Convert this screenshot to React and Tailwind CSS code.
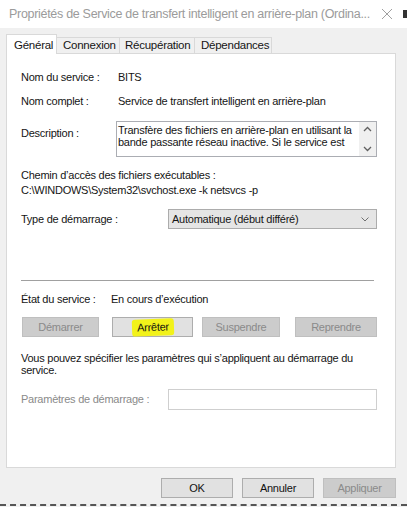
import React from "react";

const Btn = ({ children, disabled, className = "" }) => (
  <div
    className={
      "h-[20px] flex items-center justify-center border " +
      (disabled
        ? "bg-[#cccccc] border-[#bfbfbf] text-[#8a8a8a] "
        : "bg-[#e1e1e1] border-[#adadad] text-[#111] ") +
      className
    }
  >
    {children}
  </div>
);

export default function App() {
  return (
    <div
      className="w-[407px] h-[507px] bg-[#f0f0f0] overflow-hidden flex flex-col text-[11px] tracking-[-0.25px] text-[#151515]"
      style={{ fontFamily: '"Liberation Sans", Arial, sans-serif' }}
    >
      {/* Title bar */}
      <div className="h-[28px] bg-white flex items-center shrink-0">
        <div className="pl-[9px] text-[12.5px] text-[#9b9b9b] whitespace-nowrap w-[380px] tracking-[-0.3px]">
          Propriétés de Service de transfert intelligent en arrière-plan (Ordina...
        </div>
        <svg width="12" height="12" viewBox="0 0 12 12" className="ml-[1px]">
          <path d="M1 1 L11 11 M11 1 L1 11" stroke="#a0a0a0" strokeWidth="1" />
        </svg>
        <div className="ml-auto w-[4px] h-[8px] bg-[#333] mr-0" />
      </div>

      <div className="flex-1 pl-[6px] pr-[11px] flex flex-col">
        {/* Tabs */}
        <div className="mt-[6px] h-[20px] flex items-end relative z-10">
          <div className="w-[51px] h-[20px] bg-white border border-b-0 border-[#d9d9d9] flex items-start pt-[2px] pl-[7px] text-[11.5px]">
            Général
          </div>
          <div className="w-[63px] h-[17px] border border-l-0 border-b-0 border-[#d9d9d9] flex items-center pl-[6px] text-[11.5px]">
            Connexion
          </div>
          <div className="w-[75px] h-[17px] border border-l-0 border-b-0 border-[#d9d9d9] flex items-center pl-[5px] text-[11.5px]">
            Récupération
          </div>
          <div className="w-[77px] h-[17px] border border-l-0 border-b-0 border-[#d9d9d9] flex items-center pl-[6px] text-[11.5px]">
            Dépendances
          </div>
        </div>

        {/* Panel */}
        <div className="-mt-[1px] h-[415px] bg-white border border-[#d9d9d9] pl-[14px] flex flex-col">
          <div className="mt-[15px] flex leading-[16px]">
            <div className="w-[97px]">Nom du service :</div>
            <div>BITS</div>
          </div>
          <div className="mt-[8px] flex leading-[16px]">
            <div className="w-[97px]">Nom complet :</div>
            <div>Service de transfert intelligent en arrière-plan</div>
          </div>
          <div className="mt-[12px] flex">
            <div className="w-[95px] mt-[4px] leading-[16px]">Description :</div>
            <div className="w-[261px] h-[36px] border border-[#abadb3] flex">
              <div className="flex-1 pl-[1px] pt-[2px] leading-[12px] h-[34px] overflow-hidden">
                Transfère des fichiers en arrière-plan en utilisant la bande passante réseau inactive. Si le service est
              </div>
              <div className="w-[17px] bg-[#f0f0f0] flex flex-col items-center justify-between py-[4px]">
                <svg width="9" height="6" viewBox="0 0 9 6">
                  <path d="M1 5 L4.5 1.5 L8 5" stroke="#606060" strokeWidth="1.3" fill="none" />
                </svg>
                <svg width="9" height="6" viewBox="0 0 9 6">
                  <path d="M1 1 L4.5 4.5 L8 1" stroke="#606060" strokeWidth="1.3" fill="none" />
                </svg>
              </div>
            </div>
          </div>
          <div className="mt-[11px] leading-[15px]">
            <div>Chemin d’accès des fichiers exécutables :</div>
            <div>C:\WINDOWS\System32\svchost.exe -k netsvcs -p</div>
          </div>
          <div className="mt-[11px] flex items-center">
            <div className="w-[147px]">Type de démarrage :</div>
            <div className="w-[209px] h-[20px] bg-[#e5e5e5] border border-[#acacac] flex items-center pl-[3px] pr-[7px]">
              <div className="flex-1">Automatique (début différé)</div>
              <svg width="8" height="5" viewBox="0 0 8 5">
                <path d="M0.5 0.5 L4 4 L7.5 0.5" stroke="#707070" strokeWidth="1" fill="none" />
              </svg>
            </div>
          </div>
          <div className="mt-[51px] w-[353px] h-[2px] border-t border-[#a0a0a0] border-b border-b-white" />
          <div className="mt-[9px] flex leading-[16px]">
            <div className="w-[90px]">État du service :</div>
            <div>En cours d’exécution</div>
          </div>
          <div className="mt-[10px] flex">
            <Btn disabled className="ml-[1px] w-[77px]">Démarrer</Btn>
            <Btn className="ml-[13px] w-[81px]">
              <span className="bg-[#f2f21a] px-[5px] py-[2px] -rotate-2 rounded-[3px] leading-[13px]">
                Arrêter
              </span>
            </Btn>
            <Btn disabled className="ml-[9px] w-[78px]">Suspendre</Btn>
            <Btn disabled className="ml-[15px] w-[82px]">Reprendre</Btn>
          </div>
          <div className="mt-[15px] leading-[12px] w-[340px]">
            Vous pouvez spécifier les paramètres qui s’appliquent au démarrage du service.
          </div>
          <div className="mt-[13px] flex items-center">
            <div className="w-[147px] text-[#8a8a8a]">Paramètres de démarrage :</div>
            <div className="w-[209px] h-[21px] border border-[#cfcfcf] bg-white" />
          </div>
        </div>

        {/* Bottom buttons */}
        <div className="mt-[10px] flex justify-end">
          <Btn className="w-[72px]">OK</Btn>
          <Btn className="ml-[9px] w-[72px]">Annuler</Btn>
          <Btn disabled className="ml-[9px] w-[73px]">Appliquer</Btn>
        </div>
        <div className="mt-auto h-[3px] border-t-2 border-dashed border-[#555] -ml-[6px] w-[407px]" />
      </div>
    </div>
  );
}
